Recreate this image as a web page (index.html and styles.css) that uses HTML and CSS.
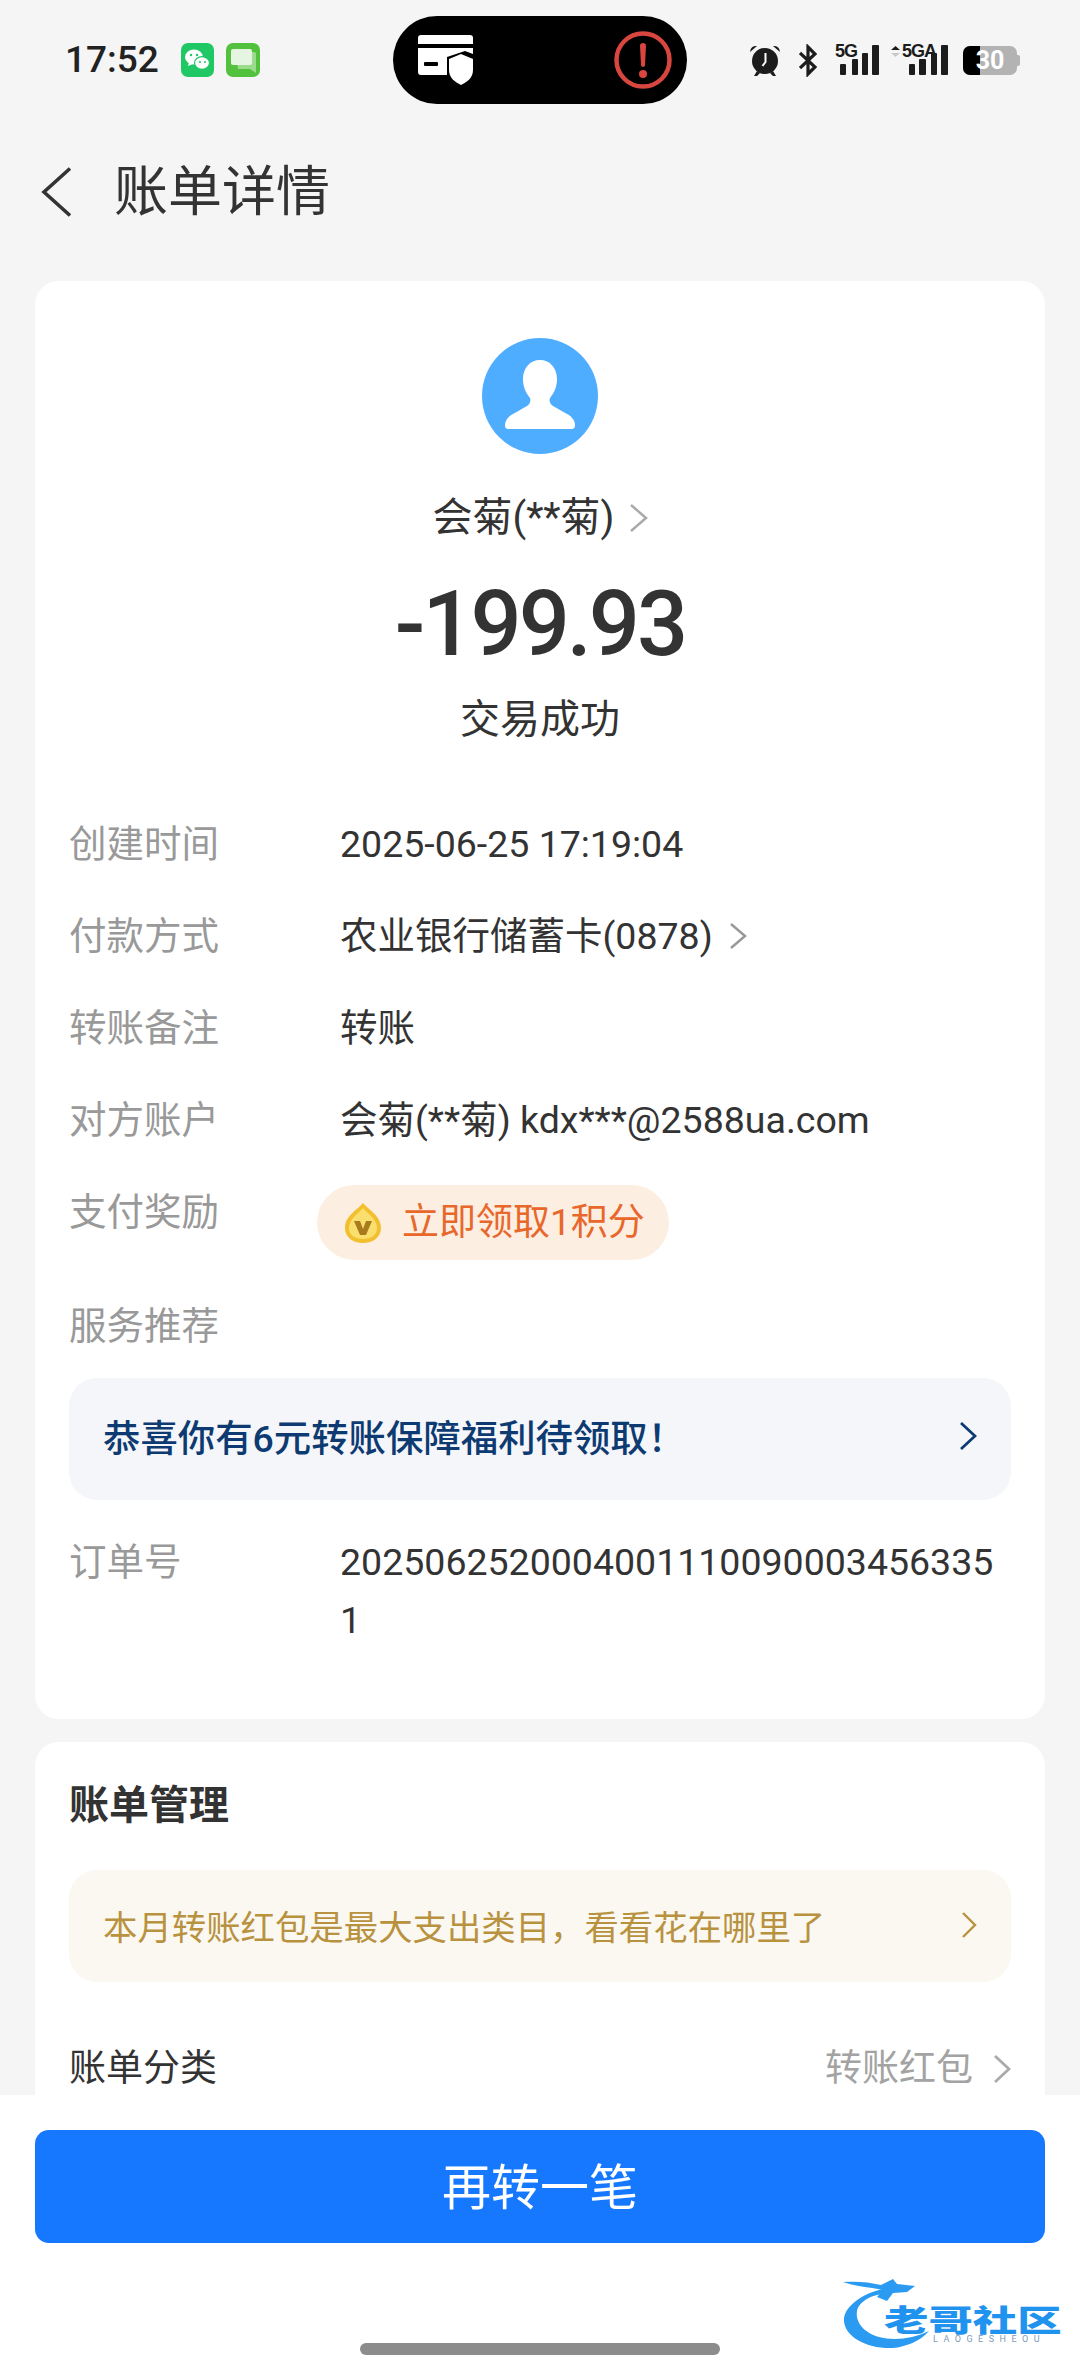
FILE: index.html
```html
<!DOCTYPE html>
<html lang="zh-CN">
<head>
<meta charset="utf-8">
<title>账单详情</title>
<link rel="stylesheet" href="styles.css">
</head>
<body>
<div class="page">
  <div class="scroll">
    <header class="status">
      <div class="status-left">
        <span class="time">17:52</span>
        <svg class="app-icon" width="33" height="34" viewBox="0 0 33 34"><rect width="33" height="34" rx="7" fill="#1fc765"/><ellipse cx="13" cy="14" rx="9" ry="7.5" fill="#fff"/><path d="M8 19l-1 4 5-2z" fill="#fff"/><ellipse cx="21" cy="20" rx="7.5" ry="6.3" fill="#fff" stroke="#1fc765" stroke-width="1.2"/><circle cx="10" cy="12" r="1.2" fill="#1fc765"/><circle cx="16" cy="12" r="1.2" fill="#1fc765"/><circle cx="19" cy="19" r="1" fill="#1fc765"/><circle cx="24" cy="19" r="1" fill="#1fc765"/></svg>
        <svg class="app-icon" width="34" height="34" viewBox="0 0 34 34"><rect width="34" height="34" rx="7" fill="#52c13e"/><path d="M10 9h18a2 2 0 0 1 2 2v19l-6-4H12z" fill="#9bdc8c"/><path d="M7 6h17a2 2 0 0 1 2 2v12a2 2 0 0 1-2 2H7a2 2 0 0 1-2-2V8a2 2 0 0 1 2-2z" fill="#e6f5e1"/></svg>
      </div>
      <div class="island">
        <svg width="56" height="50" viewBox="0 0 56 50"><path d="M3 0h49a3 3 0 0 1 3 3v6H0V3a3 3 0 0 1 3-3z" fill="#fff"/><path d="M0 13h55v6l-8-3-18 6v18H3a3 3 0 0 1-3-3z" fill="#fff"/><rect x="6" y="27" width="14" height="4" rx="1" fill="#000"/><path d="M43 19l12 5v11c0 8-6 12-12 15-6-3-12-7-12-15V24z" fill="#fff"/></svg>
        <svg width="58" height="58" viewBox="0 0 58 58"><circle cx="29" cy="29" r="26.500" fill="none" stroke="#d8463f" stroke-width="4.500"/><path d="M26 15a3 3 0 0 1 6 0l-1 19a2 2 0 0 1-4 0z" fill="#d8463f"/><circle cx="29" cy="43" r="4" fill="#d8463f"/></svg>
      </div>
      <div class="status-right">
        <svg width="32" height="33" viewBox="0 0 32 33"><circle cx="16" cy="17" r="13" fill="#1c1c1c"/><path d="M1 8a6 6 0 0 1 7-6zM31 8a6 6 0 0 0-7-6zM8 27l-3 5h3l3-3zM24 27l3 5h-3l-3-3z" fill="#1c1c1c"/><path d="M16.500 9v9l-3 4" fill="none" stroke="#fff" stroke-width="2"/></svg>
        <svg class="icon-bt" width="18" height="33" viewBox="0 0 18 33"><path d="M1 9l15 14-7 7V3l7 7L1 24" fill="none" stroke="#1c1c1c" stroke-width="3.200"/></svg>
        <svg class="icon-5g" width="45" height="41" viewBox="0 -4 45 41"><text x="0" y="13" class="net">5G</text><rect x="5" y="20" width="6" height="11" rx="1" fill="#1c1c1c"/><rect x="17" y="15" width="6" height="16" rx="1" fill="#1c1c1c"/><rect x="27" y="9" width="6" height="22" rx="1" fill="#1c1c1c"/><rect x="37" y="1" width="7" height="30" rx="1" fill="#1c1c1c"/></svg>
        <svg class="icon-5ga" width="58" height="41" viewBox="0 -4 58 41"><path d="M0 6l4.500-4 4.500 4z" fill="#1c1c1c"/><path d="M0 9h9l-4.500 4z" fill="#c8c8c8"/><text x="11" y="13" class="net">5GA</text><rect x="18" y="20" width="6" height="11" rx="1" fill="#1c1c1c"/><rect x="28" y="15" width="7" height="16" rx="1" fill="#1c1c1c"/><rect x="40" y="9" width="6" height="22" rx="1" fill="#1c1c1c"/><rect x="50" y="1" width="7" height="30" rx="1" fill="#1c1c1c"/></svg>
        <div class="battery"><span class="battery-level"></span><span class="battery-text">30</span></div>
      </div>
    </header>

    <nav class="nav">
      <svg width="31" height="50" viewBox="0 0 31 50"><path d="M29 1.500L3 25l26 23.500" fill="none" stroke="#333" stroke-width="3.600"/></svg>
      <h1 class="nav-title">账单详情</h1>
    </nav>

    <section class="card card-main">
      <div class="summary">
        <svg class="avatar" width="116" height="116" viewBox="0 0 116 116"><circle cx="58" cy="58" r="58" fill="#4fadff"/><path d="M58 22c10 0 17 8 17 19 0 8-3 14-7 19-1 3 0 6 3 8l14 8c4 2 8 6 8 11 0 3-1 4-4 4H27c-3 0-4-1-4-4 0-5 4-9 8-11l14-8c3-2 4-5 3-8-4-5-7-11-7-19 0-11 7-19 17-19z" fill="#fff"/></svg>
        <div class="payee"><span>会菊(**菊)</span><svg width="19" height="30" viewBox="0 0 19 30"><path d="M2 2l15 13L2 28" fill="none" stroke="#aaa" stroke-width="2.500"/></svg></div>
        <div class="amount">-199.93</div>
        <div class="state">交易成功</div>
      </div>

      <div class="row"><span class="label">创建时间</span><span class="value">2025-06-25 17:19:04</span></div>
      <div class="row"><span class="label">付款方式</span><span class="value value-link">农业银行储蓄卡(0878)<svg width="18" height="28" viewBox="0 0 18 28"><path d="M2 2l14 12L2 26" fill="none" stroke="#999" stroke-width="2.500"/></svg></span></div>
      <div class="row"><span class="label">转账备注</span><span class="value">转账</span></div>
      <div class="row"><span class="label">对方账户</span><span class="value">会菊(**菊) kdx***@2588ua.com</span></div>
      <div class="row row-reward">
        <span class="label">支付奖励</span>
        <span class="pill">
          <svg width="38" height="40" viewBox="0 0 38 40"><path d="M19 0c6 7 18 13 18 25 0 9-8 15-18 15S1 34 1 25C1 13 13 7 19 0z" fill="#f2c02e"/><path d="M19 5c5 6 14 11 14 20 0 7-6 11-14 11S5 32 5 25C5 16 14 11 19 5z" fill="#fadf6e"/><path d="M10 18h6l3 8 3-8h6l-6 14h-6z" fill="#a87c1e"/></svg>
          立即领取1积分
        </span>
      </div>
      <div class="row row-service"><span class="label">服务推荐</span></div>
      <div class="banner banner-blue">
        <span>恭喜你有6元转账保障福利待领取！</span>
        <svg width="18" height="30" viewBox="0 0 18 30"><path d="M2 2l14 13L2 28" fill="none" stroke="#0e3a72" stroke-width="2.800"/></svg>
      </div>
      <div class="row row-order"><span class="label">订单号</span><span class="value value-order">20250625200040011100900034563351</span></div>
    </section>

    <section class="card card-manage">
      <h2 class="manage-title">账单管理</h2>
      <div class="banner banner-gold">
        <span>本月转账红包是最大支出类目，看看花在哪里了</span>
        <svg width="16" height="28" viewBox="0 0 16 28"><path d="M2 2l12 12L2 26" fill="none" stroke="#b8923f" stroke-width="2.400"/></svg>
      </div>
      <div class="category">
        <span class="category-name">账单分类</span>
        <span class="category-value">转账红包<svg width="18" height="30" viewBox="0 0 18 30"><path d="M2 2l14 13L2 28" fill="none" stroke="#aaa" stroke-width="2.800"/></svg></span>
      </div>
    </section>
  </div>

  <footer class="footer">
    <button class="cta">再转一笔</button>
    <div class="home-bar"></div>
    <div class="watermark">
      <svg class="dragon" width="110" height="72" viewBox="0 0 110 72"><path d="M50 8C20 12 0 28 1 42c1 16 23 28 49 27 12-1 28-7 36-17-16 8-36 10-50 6C22 54 12 44 14 32c2-10 16-18 36-18z" fill="#2a9bf0"/><path d="M0 3c14-1 26 0 38 3l12-6 4 5 18 2-8 6-14 1-6 8-10-4 6-7C26 8 14 8 0 3z" fill="#2a9bf0"/></svg>
      <div class="wm-brand">老哥社区</div>
      <div class="wm-sub">LAOGESHEOU</div>
    </div>
  </footer>
</div>
</body>
</html>
```
FILE: styles.css
```css
* { box-sizing: border-box; }
html, body { margin: 0; padding: 0; }
body {
  font-family: Roboto, "Noto Sans CJK SC", sans-serif;
  background: #f5f5f5;
  color: #333;
}
.page {
  width: 1080px;
  height: 2376px;
  display: flex;
  flex-direction: column;
  overflow: hidden;
}
.scroll {
  height: 2095px;
  flex: none;
  overflow: hidden;
  padding: 16px 35px 0;
}

/* status bar */
.status {
  display: flex;
  align-items: center;
  height: 88px;
  margin: 0 -35px;
  padding-left: 65px;
}
.status-left {
  width: 328px;
  display: flex;
  align-items: center;
  gap: 12px;
}
.time {
  font-size: 37px;
  font-weight: 500;
  color: #222;
  width: 104px;
  margin-bottom: 2px;
}
.island {
  width: 294px;
  height: 88px;
  border-radius: 44px;
  background: #000;
  display: flex;
  align-items: center;
  justify-content: space-between;
  padding: 0 15px 0 25px;
}
.status-right {
  margin-left: 62px;
  display: flex;
  align-items: center;
}
.icon-bt { margin-left: 18px; }
.icon-5g { margin-left: 18px; }
.icon-5ga { margin-left: 11px; }
.net {
  font: 700 18px "Liberation Sans", sans-serif;
  fill: #1c1c1c;
  letter-spacing: -1px;
}
.battery {
  position: relative;
  margin-left: 14px;
  width: 54px;
  height: 29px;
  border-radius: 7px;
  background: #b3b3b3;
  display: flex;
  align-items: center;
  justify-content: center;
}
.battery::after {
  content: "";
  position: absolute;
  right: -3px;
  top: 9px;
  width: 3px;
  height: 11px;
  border-radius: 0 2px 2px 0;
  background: #b3b3b3;
}
.battery-level {
  position: absolute;
  left: 0;
  top: 0;
  bottom: 0;
  width: 17px;
  border-radius: 7px 0 0 7px;
  background: #000;
}
.battery-text {
  position: relative;
  color: #fff;
  font-size: 25px;
  font-weight: 700;
  line-height: 29px;
}

/* nav */
.nav {
  height: 72px;
  margin: 52px 0 0 6px;
  display: flex;
  align-items: center;
  gap: 42px;
}
.nav-title {
  margin: 0;
  padding-top: 2px;
  font-size: 54px;
  font-weight: 400;
  color: #333;
  line-height: 72px;
}

/* cards */
.card {
  background: #fff;
  border-radius: 24px;
  padding: 0 34px;
}
.card-main {
  margin-top: 53px;
  height: 1438px;
}
.card-manage {
  margin-top: 23px;
  height: 400px;
}

/* summary */
.summary {
  display: flex;
  flex-direction: column;
  align-items: center;
  padding-top: 57px;
  height: 517px;
}
.avatar { flex: none; }
.payee {
  margin-top: 36px;
  display: flex;
  align-items: center;
  gap: 14px;
  font-size: 40px;
  line-height: 56px;
}
.amount {
  margin-top: 20px;
  font-size: 90px;
  font-weight: 500;
  letter-spacing: -3px;
  line-height: 118px;
}
.state {
  margin-top: 8px;
  font-size: 40px;
  line-height: 56px;
}

/* rows */
.row {
  display: flex;
  padding: 17px 0;
  font-size: 37.500px;
  line-height: 58px;
}
.label {
  flex: none;
  width: 271px;
  color: #999;
}
.value { color: #333; }
.value-link {
  display: flex;
  align-items: center;
  gap: 16px;
}
.value-order {
  width: 660px;
  word-break: break-all;
}
.row-reward { padding-bottom: 20px; }
.pill {
  margin: 2px 0 0 -23px;
  height: 75px;
  padding: 0 24px 0 27px;
  border-radius: 38px;
  background: #fdeee2;
  color: #e8672a;
  font-size: 37px;
  display: flex;
  align-items: center;
  gap: 20px;
  white-space: nowrap;
}
.row-service { padding-bottom: 23px; }

/* banners */
.banner {
  display: flex;
  align-items: center;
  justify-content: space-between;
  border-radius: 28px;
}
.banner-blue {
  height: 122px;
  padding: 0 34px 6px;
  background: #f4f6fa;
  color: #0e3a72;
  font-size: 37.400px;
  font-weight: 500;
}
.row-order { padding-top: 33px; }

/* manage */
.manage-title {
  margin: 0;
  padding-top: 37px;
  font-size: 40px;
  font-weight: 700;
  line-height: 54px;
  color: #333;
}
.banner-gold {
  margin-top: 37px;
  height: 112px;
  padding: 0 34px 3px;
  background: #fbf8f2;
  color: #b8923f;
  font-size: 34.400px;
}
.category {
  margin-top: 58px;
  display: flex;
  align-items: center;
  justify-content: space-between;
  font-size: 37px;
  line-height: 58px;
}
.category-value {
  display: flex;
  align-items: center;
  gap: 20px;
  color: #a3a3a3;
}

/* footer */
.footer {
  position: relative;
  flex: 1;
  background: #fff;
  padding: 35px 35px 0;
  display: flex;
  flex-direction: column;
  align-items: center;
}
.cta {
  width: 100%;
  height: 113px;
  border: 0;
  border-radius: 14px;
  padding: 0 0 6px;
  background: #1677ff;
  color: #fff;
  font: 400 49px Roboto, "Noto Sans CJK SC", sans-serif;
}
.home-bar {
  margin-top: 100px;
  width: 360px;
  height: 12px;
  border-radius: 6px;
  background: #8c8c8c;
}
.watermark {
  position: absolute;
  left: 843px;
  top: 184px;
  width: 225px;
  height: 76px;
}
.dragon {
  position: absolute;
  left: 0;
  top: 0;
}
.wm-brand {
  position: absolute;
  left: 41px;
  top: 24px;
  font-family: "Noto Sans CJK SC", sans-serif;
  font-size: 30px;
  line-height: 30px;
  font-weight: 900;
  color: #1f93ee;
  white-space: nowrap;
  transform: scaleX(1.480);
  transform-origin: left center;
}
.wm-sub {
  position: absolute;
  left: 90px;
  top: 55px;
  font-size: 9px;
  line-height: 11px;
  letter-spacing: 5.500px;
  color: #7d9bb8;
  white-space: nowrap;
}
```
